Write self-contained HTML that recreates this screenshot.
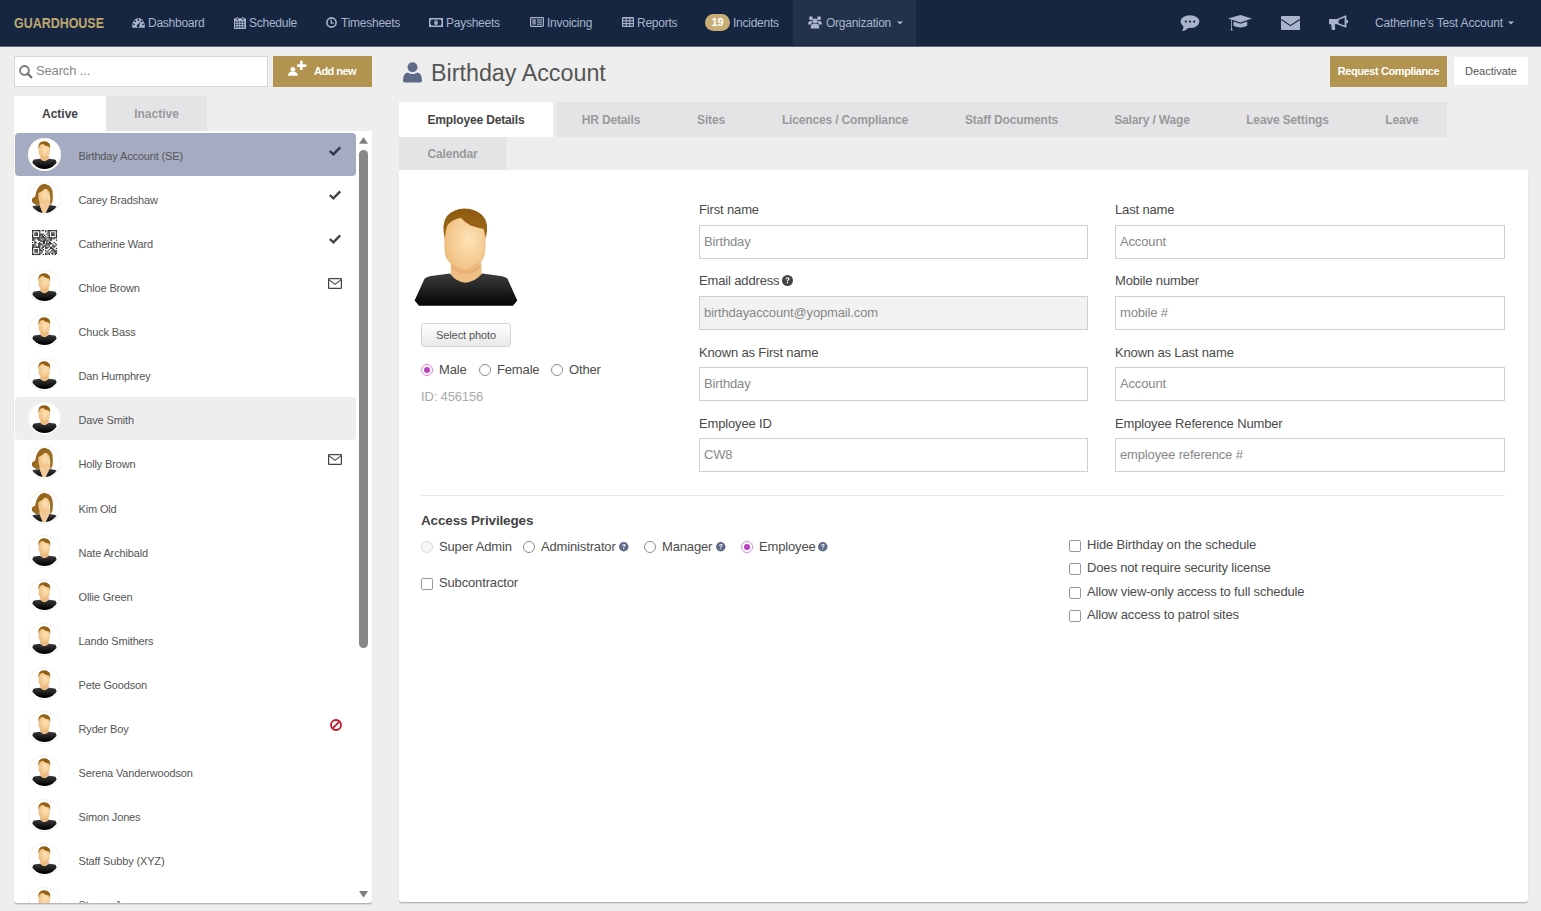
<!DOCTYPE html><html><head><meta charset="utf-8"><style>
*{box-sizing:border-box;margin:0;padding:0}
html,body{width:1541px;height:911px;overflow:hidden;background:#eeeeee;font-family:"Liberation Sans",sans-serif;color:#555;position:relative}
.a{position:absolute}
svg{display:block;overflow:visible}
#nav{left:0;top:0;width:1541px;height:46px;background:#162640;box-shadow:0 1px 0 #5d6676}
.logo{left:14px;top:16px;font-size:14px;font-weight:bold;color:#bfa870;letter-spacing:0px;white-space:nowrap;line-height:15px;transform:scaleX(0.89);transform-origin:0 0}
.ni{top:16px;font-size:12px;color:#a9b4cb;white-space:nowrap;line-height:15px;letter-spacing:-0.25px}
#org{left:793px;top:0;width:123px;height:45px;background:#22324b}
.badge{left:705px;top:14px;width:25px;height:17px;border-radius:9px;background:#c8ad75;color:#fff;font-weight:bold;font-size:11px;text-align:center;line-height:17px}
#search{left:14px;top:56px;width:254px;height:31px;background:#fff;border:1px solid #d6d6d6}
#search span{position:absolute;left:21px;top:6px;font-size:13px;color:#888;line-height:15px;letter-spacing:-0.15px}
#addnew{left:273px;top:56px;width:99px;height:31px;background:#b2934f}
#addnew span{position:absolute;left:41px;top:9px;font-size:11px;font-weight:bold;color:#fff;line-height:13px;letter-spacing:-0.55px}
.ltab{top:96px;height:35px;font-size:12px;font-weight:bold;text-align:center;line-height:37px}
#list{left:14px;top:131px;width:358px;height:772px;background:#fff;box-shadow:0 1px 1px rgba(0,0,0,.2),0 2px 1px rgba(0,0,0,.07);border-radius:0 0 3px 3px;overflow:hidden}
.row{position:absolute;left:1px;width:341px;height:43px;border-radius:4px}
.row .nm{position:absolute;left:63.5px;top:17px;font-size:11px;color:#555;white-space:nowrap;line-height:13px;letter-spacing:-0.15px}
.row .av{position:absolute;left:13px;top:5px;width:33px;height:33px;border-radius:50%;background:#fff;box-shadow:inset 0 0 0 1px #f6f3ec}
.title{left:431px;top:60px;font-size:23.3px;color:#555;white-space:nowrap;line-height:27px}
#rc{left:1330px;top:56px;width:117px;height:31px;background:#b2934f;color:#fff;font-size:11px;font-weight:bold;text-align:center;line-height:31px;letter-spacing:-0.4px}
#deact{left:1454px;top:57px;width:74px;height:28px;background:#fff;color:#555;font-size:11px;text-align:center;line-height:28px}
.tab{position:absolute;height:35px;background:#e4e4e7;color:#9a9a9a;font-size:12px;font-weight:bold;text-align:center;line-height:36px;white-space:nowrap;letter-spacing:-0.15px}
#panel{left:399px;top:170px;width:1129px;height:732px;background:#fff;box-shadow:0 1px 1px rgba(0,0,0,.2),0 2px 1px rgba(0,0,0,.07);border-radius:0 0 3px 3px}
.lbl{position:absolute;font-size:13px;color:#4a4a4a;white-space:nowrap;line-height:15px;letter-spacing:-0.15px}
.inp{position:absolute;height:34px;border:1px solid #cfcfcf;background:#fff;font-size:13px;color:#888;padding-left:4px;line-height:32px;white-space:nowrap;letter-spacing:-0.15px}
.txt{position:absolute;font-size:13px;color:#4d4d4d;white-space:nowrap;line-height:15px;letter-spacing:-0.15px}
.rad{position:absolute;width:12px;height:12px;border-radius:50%;border:1px solid #8c8c8c;background:#fff}
.rad.on{border-color:#e283e6}
.rad.on:after{content:"";position:absolute;left:2px;top:2px;width:6px;height:6px;border-radius:50%;background:#b843bc}
.chk{position:absolute;width:12px;height:12px;border-radius:2px;border:1px solid #979797;background:#fff}
.q{position:absolute;width:10px;height:10px;border-radius:50%;background:#5f6b8c;color:#fff;font-size:8px;font-weight:bold;text-align:center;line-height:10px}
</style></head><body>
<svg width="0" height="0" style="position:absolute"><defs>
<linearGradient id="shirt" x1="0" y1="0" x2="0" y2="1"><stop offset="0" stop-color="#3c3c3c"/><stop offset="1" stop-color="#050505"/></linearGradient>
<radialGradient id="skin" cx="0.6" cy="0.45" r="0.65"><stop offset="0" stop-color="#fde3b6"/><stop offset="1" stop-color="#f0bd7e"/></radialGradient>
<linearGradient id="hair" x1="0" y1="0" x2="0" y2="1"><stop offset="0" stop-color="#8e5a10"/><stop offset="1" stop-color="#a06a18"/></linearGradient>
<linearGradient id="fhair" x1="0" y1="0" x2="1" y2="1"><stop offset="0" stop-color="#8e5c16"/><stop offset="1" stop-color="#a87a30"/></linearGradient>
<linearGradient id="btn" x1="0" y1="0" x2="0" y2="1"><stop offset="0" stop-color="#ffffff"/><stop offset="1" stop-color="#e6e6e6"/></linearGradient>
<symbol id="male" viewBox="0 0 104 100">
<path d="M37 48 L36.5 80 L68 80 L67 48Z" fill="#f0bf84"/>
<path d="M37 56 Q50.6 70 67 56 L67 60 Q50.6 72 37 60Z" fill="#e2a968" opacity="0.6"/>
<path d="M0.6 92.5 L10.5 70.8 Q12.5 68.6 21 67.6 L35.8 65.6 Q50.6 84 68.4 65.6 L83 67.6 Q91.5 68.6 93.5 70.8 L103.3 92.5 L99 97.8 L5 97.8Z" fill="url(#shirt)"/>
<path d="M30.9 26 Q30.4 44 32 48.5 Q33.2 52 36 54.5 L47 61.2 Q50.6 63.2 54.2 61.2 L65.6 54.5 Q68.6 52 69.8 48.5 Q71.4 44 71 26 Q70 6 51 6 Q32 6 30.9 26Z" fill="url(#skin)" stroke="#e3aa6a" stroke-width="0.6"/>
<path d="M30.9 30.5 Q27 16 33 8 Q40 0.4 50.6 0.4 Q62 0.4 69 8 Q75.5 15 71.9 30.5 L69.6 21 Q63.5 19.6 56.6 17.4 Q50.6 14.4 46.7 9.8 Q38 12 33.8 16.7 Q31.5 22 30.9 30.5Z" fill="url(#hair)"/>
</symbol>
<symbol id="mlist" viewBox="0 0 29 29">
<clipPath id="cl"><circle cx="14.5" cy="14.5" r="14.5"/></clipPath>
<g clip-path="url(#cl)"><use href="#male" x="0.5" y="1" width="28" height="27"/>
<rect x="0" y="26" width="29" height="4" fill="#060606"/></g></symbol>
<symbol id="flist" viewBox="0 0 29 29">
<g clip-path="url(#cl)">
<path d="M9.2 15 L19.8 15 L19.7 21.3 L14.8 30 L12.8 30 L9.2 21.2Z" fill="#f3c995"/>
<path d="M9.4 21 L13 30 L1.5 30 Q0.4 25 1.6 22.8 Q4 21.4 9.4 21Z" fill="url(#shirt)"/>
<path d="M19.6 21 Q25 21.4 27.2 22.8 Q28.4 25 27.4 30 L15.2 30Z" fill="url(#shirt)"/>
<path d="M8.4 9 Q8.4 15 10.4 17 Q12.2 18.4 13.8 18.4 Q15.6 18.4 17.8 16.4 Q19.8 14 19.7 9 Q19 5 15 4.6 Q10 5 8.4 9Z" fill="url(#skin)"/>
<path d="M9 21.4 Q5 21.2 3.8 19.6 Q1.2 18 1.9 14.9 Q3.2 13.2 5.2 12.6 Q5.6 8 7.5 5 Q10.4 -0.2 14.6 -0.1 Q19.2 0.3 21.3 3.8 Q23 7 22.9 11.7 Q22.9 16 22.5 18.1 Q21.6 20.6 19.7 21.2 Q20.4 16 19.7 10 Q19 6 15 4.6 Q12.8 7.4 8.6 9 Q8.2 14 9.4 17.2 Q10 19.6 9 21.4Z" fill="url(#fhair)"/>
</g></symbol>
</defs></svg>
<div id="nav" class="a"></div><div id="org" class="a"></div>
<div class="a logo">GUARDHOUSE</div>
<svg class="a" style="left:132px;top:18px" width="13" height="10" viewBox="0 0 13 10">
<path d="M0.3 9.7 Q0 7.5 0.6 5.6 Q2.2 0.3 6.5 0.3 Q10.8 0.3 12.4 5.6 Q13 7.5 12.7 9.7Z" fill="#a9b4cb"/>
<circle cx="3.3" cy="3.2" r="0.9" fill="#162640"/><circle cx="6.4" cy="1.9" r="0.9" fill="#162640"/><circle cx="9.7" cy="3.2" r="0.9" fill="#162640"/>
<circle cx="2.1" cy="6.3" r="0.9" fill="#162640"/><circle cx="10.9" cy="6.3" r="0.9" fill="#162640"/>
<path d="M5.6 9.2 L6.0 6.8 L8.8 2.8 L7.2 7.6 Z" fill="#162640"/><circle cx="6.1" cy="8" r="1.4" fill="#162640"/>
</svg>
<svg class="a" style="left:234px;top:17px" width="12" height="12" viewBox="0 0 12 12">
<rect x="0" y="1.2" width="12" height="10.8" rx="0.8" fill="#a9b4cb"/>
<rect x="2.6" y="0" width="1.3" height="2.6" fill="#a9b4cb"/><rect x="8.1" y="0" width="1.3" height="2.6" fill="#a9b4cb"/>
<rect x="2.7" y="1" width="1.1" height="2" fill="#162640"/><rect x="8.2" y="1" width="1.1" height="2" fill="#162640"/>
<rect x="1.0" y="4.2" width="1.6" height="1.5" fill="#162640"/><rect x="3.6" y="4.2" width="1.6" height="1.5" fill="#162640"/><rect x="6.2" y="4.2" width="1.6" height="1.5" fill="#162640"/><rect x="8.8" y="4.2" width="1.6" height="1.5" fill="#162640"/><rect x="1.0" y="6.7" width="1.6" height="1.5" fill="#162640"/><rect x="3.6" y="6.7" width="1.6" height="1.5" fill="#162640"/><rect x="6.2" y="6.7" width="1.6" height="1.5" fill="#162640"/><rect x="8.8" y="6.7" width="1.6" height="1.5" fill="#162640"/><rect x="1.0" y="9.2" width="1.6" height="1.5" fill="#162640"/><rect x="3.6" y="9.2" width="1.6" height="1.5" fill="#162640"/><rect x="6.2" y="9.2" width="1.6" height="1.5" fill="#162640"/><rect x="8.8" y="9.2" width="1.6" height="1.5" fill="#162640"/></svg>
<svg class="a" style="left:326px;top:17px" width="11" height="11" viewBox="0 0 11 11">
<circle cx="5.5" cy="5.5" r="4.6" fill="none" stroke="#a9b4cb" stroke-width="1.6"/>
<path d="M5.2 2.6 V6.1 H7.6" fill="none" stroke="#a9b4cb" stroke-width="1.2"/></svg>
<svg class="a" style="left:429px;top:18px" width="14" height="9" viewBox="0 0 14 9">
<rect x="0" y="0" width="14" height="9" fill="#a9b4cb"/>
<path d="M2.2 1.4 H11.8 Q12.6 2.8 12.6 4.5 Q12.6 6.2 11.8 7.6 H2.2 Q1.4 6.2 1.4 4.5 Q1.4 2.8 2.2 1.4Z" fill="#162640"/>
<ellipse cx="7" cy="4.5" rx="1.8" ry="2.6" fill="#a9b4cb"/><rect x="6.6" y="2.8" width="0.8" height="1" fill="#162640"/></svg>
<svg class="a" style="left:530px;top:17px" width="14" height="10" viewBox="0 0 14 10">
<rect x="0.6" y="0.6" width="12.8" height="8.8" rx="0.8" fill="none" stroke="#a9b4cb" stroke-width="1.2"/>
<rect x="2.4" y="2.2" width="3.4" height="5.4" fill="#a9b4cb" opacity="0.75"/>
<rect x="7" y="2.4" width="5" height="1.1" fill="#a9b4cb"/><rect x="7" y="4.5" width="5" height="1.1" fill="#a9b4cb"/><rect x="7" y="6.6" width="5" height="1.1" fill="#a9b4cb"/></svg>
<svg class="a" style="left:622px;top:17px" width="12" height="10" viewBox="0 0 12 10">
<rect x="0" y="0" width="12" height="10" rx="0.8" fill="#a9b4cb"/>
<rect x="1.2" y="1.6" width="2.5" height="1.6" fill="#162640"/><rect x="4.8" y="1.6" width="2.5" height="1.6" fill="#162640"/><rect x="8.4" y="1.6" width="2.5" height="1.6" fill="#162640"/><rect x="1.2" y="4.4" width="2.5" height="1.6" fill="#162640"/><rect x="4.8" y="4.4" width="2.5" height="1.6" fill="#162640"/><rect x="8.4" y="4.4" width="2.5" height="1.6" fill="#162640"/><rect x="1.2" y="7.2" width="2.5" height="1.6" fill="#162640"/><rect x="4.8" y="7.2" width="2.5" height="1.6" fill="#162640"/><rect x="8.4" y="7.2" width="2.5" height="1.6" fill="#162640"/></svg>
<div class="a ni" style="left:148px">Dashboard</div>
<div class="a ni" style="left:249px">Schedule</div>
<div class="a ni" style="left:341px">Timesheets</div>
<div class="a ni" style="left:446px">Paysheets</div>
<div class="a ni" style="left:547px">Invoicing</div>
<div class="a ni" style="left:637px">Reports</div>
<div class="a ni" style="left:733px">Incidents</div>
<div class="a ni" style="left:826px">Organization</div>
<div class="a badge">19</div>
<svg class="a" style="left:808px;top:16px" width="14" height="13" viewBox="0 0 14 13">
<circle cx="3" cy="2.3" r="2" fill="#a9b4cb"/><circle cx="11" cy="2.3" r="2" fill="#a9b4cb"/>
<path d="M0 8.5 Q0 5 2.5 5 Q4 5 4.5 5.8 Q3.5 7 3.5 8.5Z" fill="#a9b4cb"/><path d="M14 8.5 Q14 5 11.5 5 Q10 5 9.5 5.8 Q10.5 7 10.5 8.5Z" fill="#a9b4cb"/>
<circle cx="7" cy="5" r="2.6" fill="#a9b4cb"/>
<path d="M2.8 12.6 Q2.4 8 5 8 H9 Q11.6 8 11.2 12.6Z" fill="#a9b4cb"/></svg>
<svg class="a" style="left:897px;top:21px" width="6" height="4" viewBox="0 0 6 4"><path d="M0 0.5 H6 L3 3.5Z" fill="#a9b4cb"/></svg>
<svg class="a" style="left:1180px;top:15px" width="20" height="17" viewBox="0 0 20 17">
<ellipse cx="10" cy="6.6" rx="9.4" ry="6.4" fill="#a9b4cb"/>
<path d="M3.5 10.5 Q3.8 14 1.8 16.2 Q6.5 15.5 8.5 12.2Z" fill="#a9b4cb"/>
<circle cx="5.8" cy="6.6" r="1.1" fill="#162640"/><circle cx="10" cy="6.6" r="1.1" fill="#162640"/><circle cx="14.2" cy="6.6" r="1.1" fill="#162640"/></svg>
<svg class="a" style="left:1228px;top:15px" width="24" height="16" viewBox="0 0 24 16">
<path d="M0 3.6 L12.4 0 L24 3.6 L12.4 7.4Z" fill="#a9b4cb"/>
<path d="M5.4 6.4 L12.4 8.8 L19.2 6.4 L19.2 10.8 Q12.4 14.2 5.4 10.8Z" fill="#a9b4cb"/>
<path d="M3.2 4.5 L3.2 13 L2.6 15.6 L4.6 15.6 L4 13 L4 4.8Z" fill="#a9b4cb"/></svg>
<svg class="a" style="left:1281px;top:16px" width="19" height="14" viewBox="0 0 19 14">
<rect x="0" y="0" width="19" height="14" rx="0.8" fill="#a9b4cb"/>
<path d="M0.3 3.5 L9.5 9.6 L18.7 3.5" fill="none" stroke="#162640" stroke-width="1.1"/></svg>
<svg class="a" style="left:1329px;top:15px" width="19" height="16" viewBox="0 0 19 16">
<path d="M0 4 H8 L16.4 0.4 Q17.4 0 17.4 1 V11.8 Q17.4 12.8 16.4 12.4 L8 9.3 H5.8 L6.2 14 Q6.3 15.1 5.2 15.1 H3.6 Q2.8 15.1 2.7 14.3 L2.2 9.3 H0.9 Q0 9.3 0 8.4Z" fill="#a9b4cb"/>
<path d="M9.6 4.9 L15.6 2.5 V10.5 L9.6 8.3Z" fill="#162640"/>
<rect x="17.2" y="5" width="1.8" height="3" rx="0.5" fill="#a9b4cb"/></svg>
<div class="a ni" style="left:1375px;letter-spacing:-0.15px">Catherine's Test Account</div>
<svg class="a" style="left:1508px;top:21px" width="6" height="4" viewBox="0 0 6 4"><path d="M0 0.5 H6 L3 3.5Z" fill="#a9b4cb"/></svg>
<div id="search" class="a"><span>Search ...</span></div>
<svg class="a" style="left:19px;top:65px" width="14" height="14" viewBox="0 0 14 14"><circle cx="5.5" cy="5.4" r="4.4" fill="none" stroke="#777" stroke-width="1.8"/><path d="M8.6 8.6 L12.4 12.4" stroke="#777" stroke-width="2.2" stroke-linecap="round"/></svg>
<div id="addnew" class="a"><span>Add new</span></div>
<svg class="a" style="left:288px;top:60px" width="19" height="17" viewBox="0 0 19 17">
<circle cx="4.9" cy="9.3" r="2.4" fill="#fff"/><path d="M0 15.8 Q0 11.4 4.9 11.4 Q9.8 11.4 9.8 15.8Z" fill="#fff"/>
<rect x="12" y="0.7" width="2.6" height="9.3" fill="#fff"/><rect x="9.1" y="4.3" width="9.3" height="2.7" fill="#fff"/></svg>
<div class="a ltab" style="left:14px;width:92px;background:#fff;color:#444">Active</div>
<div class="a ltab" style="left:106px;width:101px;background:#e4e4e7;color:#9a9a9a">Inactive</div>
<div id="list" class="a">
<div class="row" style="top:2.0px;background:#a5acc2;">
<div class="av"><svg style="position:absolute;left:2px;top:2px" width="29" height="29" viewBox="0 0 29 29"><use href="#mlist"/></svg></div>
<div class="nm">Birthday Account (SE)</div>
<svg style="position:absolute;left:314px;top:13px" width="12" height="10" viewBox="0 0 12 10"><path d="M0.8 5 L4.4 8.4 L11.2 1.4" fill="none" stroke="#2b3450" stroke-width="2.4"/></svg>
</div>
<div class="row" style="top:46.06px;">
<div class="av"><svg style="position:absolute;left:2px;top:2px" width="29" height="29" viewBox="0 0 29 29"><use href="#flist"/></svg></div>
<div class="nm">Carey Bradshaw</div>
<svg style="position:absolute;left:314px;top:13px" width="12" height="10" viewBox="0 0 12 10"><path d="M0.8 5 L4.4 8.4 L11.2 1.4" fill="none" stroke="#444" stroke-width="2.4"/></svg>
</div>
<div class="row" style="top:90.13px;">
<div class="av" style="box-shadow:none;background:#fff"><div style="position:absolute;left:4px;top:4px"><svg width="25" height="25" viewBox="0 0 25 25" fill="#222"><rect x="0.00" y="0.00" width="1.24" height="1.24"/><rect x="1.19" y="0.00" width="1.24" height="1.24"/><rect x="2.38" y="0.00" width="1.24" height="1.24"/><rect x="3.57" y="0.00" width="1.24" height="1.24"/><rect x="4.76" y="0.00" width="1.24" height="1.24"/><rect x="5.95" y="0.00" width="1.24" height="1.24"/><rect x="7.14" y="0.00" width="1.24" height="1.24"/><rect x="9.52" y="0.00" width="1.24" height="1.24"/><rect x="10.71" y="0.00" width="1.24" height="1.24"/><rect x="13.10" y="0.00" width="1.24" height="1.24"/><rect x="15.48" y="0.00" width="1.24" height="1.24"/><rect x="16.67" y="0.00" width="1.24" height="1.24"/><rect x="17.86" y="0.00" width="1.24" height="1.24"/><rect x="19.05" y="0.00" width="1.24" height="1.24"/><rect x="20.24" y="0.00" width="1.24" height="1.24"/><rect x="21.43" y="0.00" width="1.24" height="1.24"/><rect x="22.62" y="0.00" width="1.24" height="1.24"/><rect x="23.81" y="0.00" width="1.24" height="1.24"/><rect x="0.00" y="1.19" width="1.24" height="1.24"/><rect x="7.14" y="1.19" width="1.24" height="1.24"/><rect x="13.10" y="1.19" width="1.24" height="1.24"/><rect x="15.48" y="1.19" width="1.24" height="1.24"/><rect x="16.67" y="1.19" width="1.24" height="1.24"/><rect x="23.81" y="1.19" width="1.24" height="1.24"/><rect x="0.00" y="2.38" width="1.24" height="1.24"/><rect x="2.38" y="2.38" width="1.24" height="1.24"/><rect x="3.57" y="2.38" width="1.24" height="1.24"/><rect x="4.76" y="2.38" width="1.24" height="1.24"/><rect x="7.14" y="2.38" width="1.24" height="1.24"/><rect x="15.48" y="2.38" width="1.24" height="1.24"/><rect x="16.67" y="2.38" width="1.24" height="1.24"/><rect x="19.05" y="2.38" width="1.24" height="1.24"/><rect x="20.24" y="2.38" width="1.24" height="1.24"/><rect x="21.43" y="2.38" width="1.24" height="1.24"/><rect x="23.81" y="2.38" width="1.24" height="1.24"/><rect x="0.00" y="3.57" width="1.24" height="1.24"/><rect x="2.38" y="3.57" width="1.24" height="1.24"/><rect x="3.57" y="3.57" width="1.24" height="1.24"/><rect x="4.76" y="3.57" width="1.24" height="1.24"/><rect x="7.14" y="3.57" width="1.24" height="1.24"/><rect x="8.33" y="3.57" width="1.24" height="1.24"/><rect x="9.52" y="3.57" width="1.24" height="1.24"/><rect x="10.71" y="3.57" width="1.24" height="1.24"/><rect x="14.29" y="3.57" width="1.24" height="1.24"/><rect x="16.67" y="3.57" width="1.24" height="1.24"/><rect x="19.05" y="3.57" width="1.24" height="1.24"/><rect x="20.24" y="3.57" width="1.24" height="1.24"/><rect x="21.43" y="3.57" width="1.24" height="1.24"/><rect x="23.81" y="3.57" width="1.24" height="1.24"/><rect x="0.00" y="4.76" width="1.24" height="1.24"/><rect x="2.38" y="4.76" width="1.24" height="1.24"/><rect x="3.57" y="4.76" width="1.24" height="1.24"/><rect x="4.76" y="4.76" width="1.24" height="1.24"/><rect x="7.14" y="4.76" width="1.24" height="1.24"/><rect x="8.33" y="4.76" width="1.24" height="1.24"/><rect x="9.52" y="4.76" width="1.24" height="1.24"/><rect x="11.90" y="4.76" width="1.24" height="1.24"/><rect x="15.48" y="4.76" width="1.24" height="1.24"/><rect x="16.67" y="4.76" width="1.24" height="1.24"/><rect x="19.05" y="4.76" width="1.24" height="1.24"/><rect x="20.24" y="4.76" width="1.24" height="1.24"/><rect x="21.43" y="4.76" width="1.24" height="1.24"/><rect x="23.81" y="4.76" width="1.24" height="1.24"/><rect x="0.00" y="5.95" width="1.24" height="1.24"/><rect x="7.14" y="5.95" width="1.24" height="1.24"/><rect x="9.52" y="5.95" width="1.24" height="1.24"/><rect x="10.71" y="5.95" width="1.24" height="1.24"/><rect x="13.10" y="5.95" width="1.24" height="1.24"/><rect x="16.67" y="5.95" width="1.24" height="1.24"/><rect x="23.81" y="5.95" width="1.24" height="1.24"/><rect x="0.00" y="7.14" width="1.24" height="1.24"/><rect x="1.19" y="7.14" width="1.24" height="1.24"/><rect x="2.38" y="7.14" width="1.24" height="1.24"/><rect x="3.57" y="7.14" width="1.24" height="1.24"/><rect x="4.76" y="7.14" width="1.24" height="1.24"/><rect x="5.95" y="7.14" width="1.24" height="1.24"/><rect x="7.14" y="7.14" width="1.24" height="1.24"/><rect x="8.33" y="7.14" width="1.24" height="1.24"/><rect x="9.52" y="7.14" width="1.24" height="1.24"/><rect x="10.71" y="7.14" width="1.24" height="1.24"/><rect x="11.90" y="7.14" width="1.24" height="1.24"/><rect x="14.29" y="7.14" width="1.24" height="1.24"/><rect x="15.48" y="7.14" width="1.24" height="1.24"/><rect x="16.67" y="7.14" width="1.24" height="1.24"/><rect x="17.86" y="7.14" width="1.24" height="1.24"/><rect x="19.05" y="7.14" width="1.24" height="1.24"/><rect x="20.24" y="7.14" width="1.24" height="1.24"/><rect x="21.43" y="7.14" width="1.24" height="1.24"/><rect x="22.62" y="7.14" width="1.24" height="1.24"/><rect x="23.81" y="7.14" width="1.24" height="1.24"/><rect x="0.00" y="8.33" width="1.24" height="1.24"/><rect x="1.19" y="8.33" width="1.24" height="1.24"/><rect x="2.38" y="8.33" width="1.24" height="1.24"/><rect x="4.76" y="8.33" width="1.24" height="1.24"/><rect x="5.95" y="8.33" width="1.24" height="1.24"/><rect x="7.14" y="8.33" width="1.24" height="1.24"/><rect x="9.52" y="8.33" width="1.24" height="1.24"/><rect x="11.90" y="8.33" width="1.24" height="1.24"/><rect x="13.10" y="8.33" width="1.24" height="1.24"/><rect x="16.67" y="8.33" width="1.24" height="1.24"/><rect x="17.86" y="8.33" width="1.24" height="1.24"/><rect x="19.05" y="8.33" width="1.24" height="1.24"/><rect x="21.43" y="8.33" width="1.24" height="1.24"/><rect x="0.00" y="9.52" width="1.24" height="1.24"/><rect x="1.19" y="9.52" width="1.24" height="1.24"/><rect x="5.95" y="9.52" width="1.24" height="1.24"/><rect x="7.14" y="9.52" width="1.24" height="1.24"/><rect x="8.33" y="9.52" width="1.24" height="1.24"/><rect x="10.71" y="9.52" width="1.24" height="1.24"/><rect x="11.90" y="9.52" width="1.24" height="1.24"/><rect x="13.10" y="9.52" width="1.24" height="1.24"/><rect x="14.29" y="9.52" width="1.24" height="1.24"/><rect x="15.48" y="9.52" width="1.24" height="1.24"/><rect x="17.86" y="9.52" width="1.24" height="1.24"/><rect x="19.05" y="9.52" width="1.24" height="1.24"/><rect x="23.81" y="9.52" width="1.24" height="1.24"/><rect x="2.38" y="10.71" width="1.24" height="1.24"/><rect x="8.33" y="10.71" width="1.24" height="1.24"/><rect x="9.52" y="10.71" width="1.24" height="1.24"/><rect x="10.71" y="10.71" width="1.24" height="1.24"/><rect x="11.90" y="10.71" width="1.24" height="1.24"/><rect x="14.29" y="10.71" width="1.24" height="1.24"/><rect x="16.67" y="10.71" width="1.24" height="1.24"/><rect x="0.00" y="11.90" width="1.24" height="1.24"/><rect x="2.38" y="11.90" width="1.24" height="1.24"/><rect x="3.57" y="11.90" width="1.24" height="1.24"/><rect x="7.14" y="11.90" width="1.24" height="1.24"/><rect x="10.71" y="11.90" width="1.24" height="1.24"/><rect x="11.90" y="11.90" width="1.24" height="1.24"/><rect x="14.29" y="11.90" width="1.24" height="1.24"/><rect x="16.67" y="11.90" width="1.24" height="1.24"/><rect x="17.86" y="11.90" width="1.24" height="1.24"/><rect x="21.43" y="11.90" width="1.24" height="1.24"/><rect x="2.38" y="13.10" width="1.24" height="1.24"/><rect x="5.95" y="13.10" width="1.24" height="1.24"/><rect x="7.14" y="13.10" width="1.24" height="1.24"/><rect x="8.33" y="13.10" width="1.24" height="1.24"/><rect x="10.71" y="13.10" width="1.24" height="1.24"/><rect x="11.90" y="13.10" width="1.24" height="1.24"/><rect x="14.29" y="13.10" width="1.24" height="1.24"/><rect x="15.48" y="13.10" width="1.24" height="1.24"/><rect x="16.67" y="13.10" width="1.24" height="1.24"/><rect x="17.86" y="13.10" width="1.24" height="1.24"/><rect x="19.05" y="13.10" width="1.24" height="1.24"/><rect x="22.62" y="13.10" width="1.24" height="1.24"/><rect x="0.00" y="14.29" width="1.24" height="1.24"/><rect x="1.19" y="14.29" width="1.24" height="1.24"/><rect x="2.38" y="14.29" width="1.24" height="1.24"/><rect x="5.95" y="14.29" width="1.24" height="1.24"/><rect x="7.14" y="14.29" width="1.24" height="1.24"/><rect x="8.33" y="14.29" width="1.24" height="1.24"/><rect x="9.52" y="14.29" width="1.24" height="1.24"/><rect x="13.10" y="14.29" width="1.24" height="1.24"/><rect x="14.29" y="14.29" width="1.24" height="1.24"/><rect x="15.48" y="14.29" width="1.24" height="1.24"/><rect x="16.67" y="14.29" width="1.24" height="1.24"/><rect x="20.24" y="14.29" width="1.24" height="1.24"/><rect x="23.81" y="14.29" width="1.24" height="1.24"/><rect x="0.00" y="15.48" width="1.24" height="1.24"/><rect x="1.19" y="15.48" width="1.24" height="1.24"/><rect x="3.57" y="15.48" width="1.24" height="1.24"/><rect x="5.95" y="15.48" width="1.24" height="1.24"/><rect x="7.14" y="15.48" width="1.24" height="1.24"/><rect x="10.71" y="15.48" width="1.24" height="1.24"/><rect x="11.90" y="15.48" width="1.24" height="1.24"/><rect x="13.10" y="15.48" width="1.24" height="1.24"/><rect x="16.67" y="15.48" width="1.24" height="1.24"/><rect x="20.24" y="15.48" width="1.24" height="1.24"/><rect x="21.43" y="15.48" width="1.24" height="1.24"/><rect x="22.62" y="15.48" width="1.24" height="1.24"/><rect x="0.00" y="16.67" width="1.24" height="1.24"/><rect x="1.19" y="16.67" width="1.24" height="1.24"/><rect x="2.38" y="16.67" width="1.24" height="1.24"/><rect x="3.57" y="16.67" width="1.24" height="1.24"/><rect x="4.76" y="16.67" width="1.24" height="1.24"/><rect x="5.95" y="16.67" width="1.24" height="1.24"/><rect x="7.14" y="16.67" width="1.24" height="1.24"/><rect x="9.52" y="16.67" width="1.24" height="1.24"/><rect x="10.71" y="16.67" width="1.24" height="1.24"/><rect x="13.10" y="16.67" width="1.24" height="1.24"/><rect x="14.29" y="16.67" width="1.24" height="1.24"/><rect x="15.48" y="16.67" width="1.24" height="1.24"/><rect x="17.86" y="16.67" width="1.24" height="1.24"/><rect x="19.05" y="16.67" width="1.24" height="1.24"/><rect x="21.43" y="16.67" width="1.24" height="1.24"/><rect x="0.00" y="17.86" width="1.24" height="1.24"/><rect x="7.14" y="17.86" width="1.24" height="1.24"/><rect x="9.52" y="17.86" width="1.24" height="1.24"/><rect x="13.10" y="17.86" width="1.24" height="1.24"/><rect x="14.29" y="17.86" width="1.24" height="1.24"/><rect x="17.86" y="17.86" width="1.24" height="1.24"/><rect x="19.05" y="17.86" width="1.24" height="1.24"/><rect x="20.24" y="17.86" width="1.24" height="1.24"/><rect x="23.81" y="17.86" width="1.24" height="1.24"/><rect x="0.00" y="19.05" width="1.24" height="1.24"/><rect x="2.38" y="19.05" width="1.24" height="1.24"/><rect x="3.57" y="19.05" width="1.24" height="1.24"/><rect x="4.76" y="19.05" width="1.24" height="1.24"/><rect x="7.14" y="19.05" width="1.24" height="1.24"/><rect x="8.33" y="19.05" width="1.24" height="1.24"/><rect x="10.71" y="19.05" width="1.24" height="1.24"/><rect x="16.67" y="19.05" width="1.24" height="1.24"/><rect x="20.24" y="19.05" width="1.24" height="1.24"/><rect x="21.43" y="19.05" width="1.24" height="1.24"/><rect x="0.00" y="20.24" width="1.24" height="1.24"/><rect x="2.38" y="20.24" width="1.24" height="1.24"/><rect x="3.57" y="20.24" width="1.24" height="1.24"/><rect x="4.76" y="20.24" width="1.24" height="1.24"/><rect x="7.14" y="20.24" width="1.24" height="1.24"/><rect x="8.33" y="20.24" width="1.24" height="1.24"/><rect x="9.52" y="20.24" width="1.24" height="1.24"/><rect x="13.10" y="20.24" width="1.24" height="1.24"/><rect x="15.48" y="20.24" width="1.24" height="1.24"/><rect x="19.05" y="20.24" width="1.24" height="1.24"/><rect x="20.24" y="20.24" width="1.24" height="1.24"/><rect x="21.43" y="20.24" width="1.24" height="1.24"/><rect x="22.62" y="20.24" width="1.24" height="1.24"/><rect x="23.81" y="20.24" width="1.24" height="1.24"/><rect x="0.00" y="21.43" width="1.24" height="1.24"/><rect x="2.38" y="21.43" width="1.24" height="1.24"/><rect x="3.57" y="21.43" width="1.24" height="1.24"/><rect x="4.76" y="21.43" width="1.24" height="1.24"/><rect x="7.14" y="21.43" width="1.24" height="1.24"/><rect x="9.52" y="21.43" width="1.24" height="1.24"/><rect x="14.29" y="21.43" width="1.24" height="1.24"/><rect x="17.86" y="21.43" width="1.24" height="1.24"/><rect x="21.43" y="21.43" width="1.24" height="1.24"/><rect x="22.62" y="21.43" width="1.24" height="1.24"/><rect x="23.81" y="21.43" width="1.24" height="1.24"/><rect x="0.00" y="22.62" width="1.24" height="1.24"/><rect x="7.14" y="22.62" width="1.24" height="1.24"/><rect x="8.33" y="22.62" width="1.24" height="1.24"/><rect x="13.10" y="22.62" width="1.24" height="1.24"/><rect x="15.48" y="22.62" width="1.24" height="1.24"/><rect x="16.67" y="22.62" width="1.24" height="1.24"/><rect x="19.05" y="22.62" width="1.24" height="1.24"/><rect x="20.24" y="22.62" width="1.24" height="1.24"/><rect x="22.62" y="22.62" width="1.24" height="1.24"/><rect x="23.81" y="22.62" width="1.24" height="1.24"/><rect x="0.00" y="23.81" width="1.24" height="1.24"/><rect x="1.19" y="23.81" width="1.24" height="1.24"/><rect x="2.38" y="23.81" width="1.24" height="1.24"/><rect x="3.57" y="23.81" width="1.24" height="1.24"/><rect x="4.76" y="23.81" width="1.24" height="1.24"/><rect x="5.95" y="23.81" width="1.24" height="1.24"/><rect x="7.14" y="23.81" width="1.24" height="1.24"/><rect x="10.71" y="23.81" width="1.24" height="1.24"/><rect x="13.10" y="23.81" width="1.24" height="1.24"/><rect x="14.29" y="23.81" width="1.24" height="1.24"/><rect x="16.67" y="23.81" width="1.24" height="1.24"/><rect x="20.24" y="23.81" width="1.24" height="1.24"/><rect x="22.62" y="23.81" width="1.24" height="1.24"/></svg></div></div>
<div class="nm">Catherine Ward</div>
<svg style="position:absolute;left:314px;top:13px" width="12" height="10" viewBox="0 0 12 10"><path d="M0.8 5 L4.4 8.4 L11.2 1.4" fill="none" stroke="#444" stroke-width="2.4"/></svg>
</div>
<div class="row" style="top:134.19px;">
<div class="av"><svg style="position:absolute;left:2px;top:2px" width="29" height="29" viewBox="0 0 29 29"><use href="#mlist"/></svg></div>
<div class="nm">Chloe Brown</div>
<svg style="position:absolute;left:313px;top:13px" width="14" height="11" viewBox="0 0 14 11"><rect x="0.6" y="0.6" width="12.8" height="9.8" rx="0.6" fill="none" stroke="#444" stroke-width="1.2"/><path d="M0.8 1.6 L7 6.4 L13.2 1.6" fill="none" stroke="#444" stroke-width="1.1"/></svg>
</div>
<div class="row" style="top:178.26px;">
<div class="av"><svg style="position:absolute;left:2px;top:2px" width="29" height="29" viewBox="0 0 29 29"><use href="#mlist"/></svg></div>
<div class="nm">Chuck Bass</div>
</div>
<div class="row" style="top:222.32px;">
<div class="av"><svg style="position:absolute;left:2px;top:2px" width="29" height="29" viewBox="0 0 29 29"><use href="#mlist"/></svg></div>
<div class="nm">Dan Humphrey</div>
</div>
<div class="row" style="top:266.39px;background:#eeeeee;">
<div class="av"><svg style="position:absolute;left:2px;top:2px" width="29" height="29" viewBox="0 0 29 29"><use href="#mlist"/></svg></div>
<div class="nm">Dave Smith</div>
</div>
<div class="row" style="top:310.45px;">
<div class="av"><svg style="position:absolute;left:2px;top:2px" width="29" height="29" viewBox="0 0 29 29"><use href="#flist"/></svg></div>
<div class="nm">Holly Brown</div>
<svg style="position:absolute;left:313px;top:13px" width="14" height="11" viewBox="0 0 14 11"><rect x="0.6" y="0.6" width="12.8" height="9.8" rx="0.6" fill="none" stroke="#444" stroke-width="1.2"/><path d="M0.8 1.6 L7 6.4 L13.2 1.6" fill="none" stroke="#444" stroke-width="1.1"/></svg>
</div>
<div class="row" style="top:354.52px;">
<div class="av"><svg style="position:absolute;left:2px;top:2px" width="29" height="29" viewBox="0 0 29 29"><use href="#flist"/></svg></div>
<div class="nm">Kim Old</div>
</div>
<div class="row" style="top:398.58px;">
<div class="av"><svg style="position:absolute;left:2px;top:2px" width="29" height="29" viewBox="0 0 29 29"><use href="#mlist"/></svg></div>
<div class="nm">Nate Archibald</div>
</div>
<div class="row" style="top:442.65px;">
<div class="av"><svg style="position:absolute;left:2px;top:2px" width="29" height="29" viewBox="0 0 29 29"><use href="#mlist"/></svg></div>
<div class="nm">Ollie Green</div>
</div>
<div class="row" style="top:486.71px;">
<div class="av"><svg style="position:absolute;left:2px;top:2px" width="29" height="29" viewBox="0 0 29 29"><use href="#mlist"/></svg></div>
<div class="nm">Lando Smithers</div>
</div>
<div class="row" style="top:530.78px;">
<div class="av"><svg style="position:absolute;left:2px;top:2px" width="29" height="29" viewBox="0 0 29 29"><use href="#mlist"/></svg></div>
<div class="nm">Pete Goodson</div>
</div>
<div class="row" style="top:574.85px;">
<div class="av"><svg style="position:absolute;left:2px;top:2px" width="29" height="29" viewBox="0 0 29 29"><use href="#mlist"/></svg></div>
<div class="nm">Ryder Boy</div>
<svg style="position:absolute;left:315px;top:13px" width="12" height="12" viewBox="0 0 12 12"><circle cx="6" cy="6" r="5" fill="none" stroke="#c2182c" stroke-width="1.8"/><path d="M2.6 9.4 L9.4 2.6" stroke="#c2182c" stroke-width="1.8"/></svg>
</div>
<div class="row" style="top:618.91px;">
<div class="av"><svg style="position:absolute;left:2px;top:2px" width="29" height="29" viewBox="0 0 29 29"><use href="#mlist"/></svg></div>
<div class="nm">Serena Vanderwoodson</div>
</div>
<div class="row" style="top:662.97px;">
<div class="av"><svg style="position:absolute;left:2px;top:2px" width="29" height="29" viewBox="0 0 29 29"><use href="#mlist"/></svg></div>
<div class="nm">Simon Jones</div>
</div>
<div class="row" style="top:707.04px;">
<div class="av"><svg style="position:absolute;left:2px;top:2px" width="29" height="29" viewBox="0 0 29 29"><use href="#mlist"/></svg></div>
<div class="nm">Staff Subby (XYZ)</div>
</div>
<div class="row" style="top:751.11px;">
<div class="av"><svg style="position:absolute;left:2px;top:2px" width="29" height="29" viewBox="0 0 29 29"><use href="#mlist"/></svg></div>
<div class="nm">Steven Jones</div>
</div>
<svg style="position:absolute;left:345px;top:6px" width="9" height="7" viewBox="0 0 9 7"><path d="M4.5 0 L9 6.8 H0Z" fill="#808080"/></svg>
<div style="position:absolute;left:345px;top:19px;width:9px;height:498px;border-radius:4.5px;background:#888"></div>
<svg style="position:absolute;left:345px;top:760px" width="9" height="7" viewBox="0 0 9 7"><path d="M0 0 H9 L4.5 6.8Z" fill="#808080"/></svg>
</div>
<svg class="a" style="left:403px;top:62px" width="19" height="21" viewBox="0 0 19 21"><circle cx="9.5" cy="5.2" r="5" fill="#5f6a88"/><path d="M0 18.4 Q0 11.6 4.6 10.6 Q9.5 13.6 14.4 10.6 Q19 11.6 19 18.4 Q19 20.6 16.8 20.6 H2.2 Q0 20.6 0 18.4Z" fill="#5f6a88"/></svg>
<div class="a title">Birthday Account</div>
<div id="rc" class="a">Request Compliance</div>
<div id="deact" class="a">Deactivate</div>
<div class="tab" style="left:399px;top:102px;width:154px;background:#fff;color:#444;">Employee Details</div>
<div class="tab" style="left:553px;top:102px;width:116px;box-shadow:inset 4px 0 0 #eaeaea;">HR Details</div>
<div class="tab" style="left:669px;top:102px;width:84px;">Sites</div>
<div class="tab" style="left:753px;top:102px;width:184px;">Licences / Compliance</div>
<div class="tab" style="left:937px;top:102px;width:149px;">Staff Documents</div>
<div class="tab" style="left:1086px;top:102px;width:132px;">Salary / Wage</div>
<div class="tab" style="left:1218px;top:102px;width:139px;">Leave Settings</div>
<div class="tab" style="left:1357px;top:102px;width:90px;">Leave</div>
<div class="tab" style="left:399px;top:137px;width:107px;height:33px;line-height:35px">Calendar</div>
<div id="panel" class="a"></div>
<svg class="a" style="left:414px;top:208px" width="104" height="100"><use href="#male"/></svg>
<div class="a" style="left:421px;top:323px;width:90px;height:24px;border:1px solid #d4d4d4;border-radius:3px;background:linear-gradient(#fff,#e8e8e8);font-size:11px;color:#555;letter-spacing:-0.1px;text-align:center;line-height:22px">Select photo</div>
<div class="rad on" style="left:421px;top:364px"></div><div class="txt" style="left:439px;top:362px">Male</div>
<div class="rad" style="left:479px;top:364px"></div><div class="txt" style="left:497px;top:362px">Female</div>
<div class="rad" style="left:551px;top:364px"></div><div class="txt" style="left:569px;top:362px">Other</div>
<div class="txt" style="left:421px;top:389px;color:#aaa">ID: 456156</div>
<div class="lbl" style="left:699px;top:202px">First name</div>
<div class="inp" style="left:699px;top:225px;width:389px;">Birthday</div>
<div class="lbl" style="left:1115px;top:202px">Last name</div>
<div class="inp" style="left:1115px;top:225px;width:390px;">Account</div>
<div class="lbl" style="left:699px;top:273px">Email address</div>
<div class="inp" style="left:699px;top:296px;width:389px;background:#f2f2f2;">birthdayaccount@yopmail.com</div>
<div class="lbl" style="left:1115px;top:273px">Mobile number</div>
<div class="inp" style="left:1115px;top:296px;width:390px;">mobile #</div>
<div class="lbl" style="left:699px;top:345px">Known as First name</div>
<div class="inp" style="left:699px;top:367px;width:389px;">Birthday</div>
<div class="lbl" style="left:1115px;top:345px">Known as Last name</div>
<div class="inp" style="left:1115px;top:367px;width:390px;">Account</div>
<div class="lbl" style="left:699px;top:416px">Employee ID</div>
<div class="inp" style="left:699px;top:438px;width:389px;">CW8</div>
<div class="lbl" style="left:1115px;top:416px">Employee Reference Number</div>
<div class="inp" style="left:1115px;top:438px;width:390px;">employee reference #</div>
<svg class="a" style="left:782px;top:275px" width="11" height="11" viewBox="0 0 10 10"><circle cx="5" cy="5" r="5" fill="#444"/><path d="M3.3 3.9 Q3.3 2 5.1 2 Q6.9 2 6.9 3.5 Q6.9 4.4 5.9 4.9 Q5.4 5.2 5.4 5.9 H4.5 Q4.4 4.8 5.2 4.3 Q5.8 3.9 5.8 3.5 Q5.8 2.9 5.1 2.9 Q4.4 2.9 4.3 3.9Z" fill="#fff"/><rect x="4.45" y="6.5" width="1.05" height="1.1" fill="#fff"/></svg>
<div class="a" style="left:421px;top:495px;width:1084px;height:1px;background:#e8e8e8"></div>
<div class="txt" style="left:421px;top:513px;font-weight:bold;color:#444;font-size:13.5px">Access Privileges</div>
<div class="rad" style="left:421px;top:541px;border-color:#ddd;background:#f6f6f6"></div><div class="txt" style="left:439px;top:539px">Super Admin</div>
<div class="rad" style="left:523px;top:541px"></div><div class="txt" style="left:541px;top:539px">Administrator</div><svg class="a" style="left:619px;top:541.5px" width="9.5" height="9.5" viewBox="0 0 10 10"><circle cx="5" cy="5" r="5" fill="#5f6a88"/><path d="M3.3 3.9 Q3.3 2 5.1 2 Q6.9 2 6.9 3.5 Q6.9 4.4 5.9 4.9 Q5.4 5.2 5.4 5.9 H4.5 Q4.4 4.8 5.2 4.3 Q5.8 3.9 5.8 3.5 Q5.8 2.9 5.1 2.9 Q4.4 2.9 4.3 3.9Z" fill="#fff"/><rect x="4.45" y="6.5" width="1.05" height="1.1" fill="#fff"/></svg>
<div class="rad" style="left:644px;top:541px"></div><div class="txt" style="left:662px;top:539px">Manager</div><svg class="a" style="left:715.5px;top:541.5px" width="9.5" height="9.5" viewBox="0 0 10 10"><circle cx="5" cy="5" r="5" fill="#5f6a88"/><path d="M3.3 3.9 Q3.3 2 5.1 2 Q6.9 2 6.9 3.5 Q6.9 4.4 5.9 4.9 Q5.4 5.2 5.4 5.9 H4.5 Q4.4 4.8 5.2 4.3 Q5.8 3.9 5.8 3.5 Q5.8 2.9 5.1 2.9 Q4.4 2.9 4.3 3.9Z" fill="#fff"/><rect x="4.45" y="6.5" width="1.05" height="1.1" fill="#fff"/></svg>
<div class="rad on" style="left:741px;top:541px"></div><div class="txt" style="left:759px;top:539px">Employee</div><svg class="a" style="left:818px;top:541.5px" width="9.5" height="9.5" viewBox="0 0 10 10"><circle cx="5" cy="5" r="5" fill="#5f6a88"/><path d="M3.3 3.9 Q3.3 2 5.1 2 Q6.9 2 6.9 3.5 Q6.9 4.4 5.9 4.9 Q5.4 5.2 5.4 5.9 H4.5 Q4.4 4.8 5.2 4.3 Q5.8 3.9 5.8 3.5 Q5.8 2.9 5.1 2.9 Q4.4 2.9 4.3 3.9Z" fill="#fff"/><rect x="4.45" y="6.5" width="1.05" height="1.1" fill="#fff"/></svg>
<div class="chk" style="left:421px;top:578px"></div><div class="txt" style="left:439px;top:575px">Subcontractor</div>
<div class="chk" style="left:1069px;top:540px"></div><div class="txt" style="left:1087px;top:537px">Hide Birthday on the schedule</div>
<div class="chk" style="left:1069px;top:563px"></div><div class="txt" style="left:1087px;top:560px">Does not require security license</div>
<div class="chk" style="left:1069px;top:587px"></div><div class="txt" style="left:1087px;top:584px">Allow view-only access to full schedule</div>
<div class="chk" style="left:1069px;top:610px"></div><div class="txt" style="left:1087px;top:607px">Allow access to patrol sites</div>
</body></html>
